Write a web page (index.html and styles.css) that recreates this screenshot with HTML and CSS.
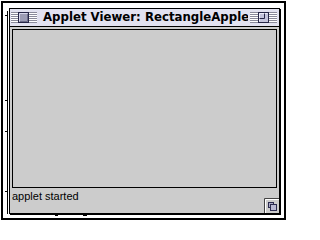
FILE: index.html
```html
<!DOCTYPE html>
<html>
<head>
<meta charset="utf-8">
<link rel="stylesheet" href="styles.css">
</head>
<body>
<div class="screen">
  <div class="behind-edge"></div>
  <div class="tick t1"></div>
  <div class="tick t2"></div>
  <div class="tick t3"></div>
  <div class="tick t4"></div>
  <div class="mark m1"></div>
  <div class="mark m2"></div>
  <div class="window">
    <div class="titlebar">
      <div class="stripes s-a"></div>
      <svg class="box" width="11" height="11" viewBox="0 0 11 11">
        <rect x="0.5" y="0.5" width="10" height="10" fill="#9c9cb4" stroke="#262646"/>
        <path d="M1.5 9.5V1.5H9.5" fill="none" stroke="#d8d8ec"/>
        <path d="M2 9.5H9.5V2" fill="none" stroke="#6c6c88"/>
      </svg>
      <div class="stripes s-b"></div>
      <div class="title">Applet Viewer: RectangleApplet</div>
      <div class="stripes s-b"></div>
      <svg class="box" width="11" height="11" viewBox="0 0 11 11">
        <rect x="0.5" y="0.5" width="10" height="10" fill="#c4c4dc" stroke="#262646"/>
        <path d="M1.5 9.5V1.5H9.5" fill="none" stroke="#eeeefa"/>
        <path d="M1.5 6.5H6.5V1.5" fill="none" stroke="#262646"/>
      </svg>
      <div class="stripes s-c"></div>
    </div>
    <div class="content">
      <div class="panel"></div>
      <div class="status">
        <span class="status-text">applet started</span>
        <svg class="grow" width="15" height="15" viewBox="0 0 15 15">
          <path d="M0.5 15V0.5H15" fill="none" stroke="#444"/>
          <path d="M1.5 15V1.5H15" fill="none" stroke="#fff"/>
          <rect x="4.5" y="4.5" width="5" height="5" fill="#a8a8c4" stroke="#2a2a4e"/>
          <rect x="6.5" y="6.5" width="6" height="6" fill="#b8b8d2" stroke="#2a2a4e"/>
        </svg>
      </div>
    </div>
  </div>
</div>
</body>
</html>
```
FILE: styles.css
```css
html, body {
  margin: 0;
  padding: 0;
  background: #fff;
}

body {
  width: 287px;
  height: 221px;
  overflow: hidden;
}

.screen {
  position: relative;
  box-sizing: border-box;
  margin: 1px;
  width: 285px;
  height: 219px;
  border: 2px solid #000;
  padding: 5px 0 0 6px;
}

.behind-edge {
  position: absolute;
  left: 4px;
  top: 8px;
  width: 1px;
  height: 203px;
  background: #000;
}

.tick {
  position: absolute;
  left: 2px;
  width: 3px;
  height: 1px;
  background: #000;
}
.t1 { top: 12px; }
.t2 { top: 97px; }
.t3 { top: 128px; }
.t4 { top: 188px; }

.mark {
  position: absolute;
  top: 211px;
  height: 2px;
  background: #000;
}
.m1 { left: 52px; width: 3px; }
.m2 { left: 80px; width: 4px; }

.window {
  position: relative;
  box-sizing: border-box;
  width: 271px;
  height: 206px;
  border: 1px solid #000;
  box-shadow: 1px 1px 0 #000;
  background: #cccccc;
  display: flex;
  flex-direction: column;
}

.titlebar {
  box-sizing: border-box;
  height: 18px;
  flex: none;
  border-bottom: 1px solid #000;
  background: #e2e2f0;
  display: flex;
  align-items: center;
  padding: 0 2px 0 1px;
}

.stripes {
  height: 11px;
  flex: none;
  background: repeating-linear-gradient(to bottom, #8a8a9a 0, #8a8a9a 1px, #ffffff 1px, #ffffff 2px);
}
.s-a { width: 7px; }
.s-b { width: 8px; }
.s-c { width: 8px; }

.box {
  flex: none;
  display: block;
}

.title {
  flex: 1;
  min-width: 0;
  overflow: hidden;
  white-space: nowrap;
  font-family: "DejaVu Sans", sans-serif;
  font-weight: bold;
  font-size: 11.75px;
  line-height: 17px;
  color: #000;
  padding-left: 6px;
  margin-right: 2px;
}

.content {
  flex: 1;
  display: flex;
  flex-direction: column;
  padding: 2px 0 0 2px;
}

.panel {
  box-sizing: border-box;
  width: 265px;
  height: 159px;
  flex: none;
  border: 1px solid #000;
  background: #cccccc;
}

.status {
  flex: 1;
  display: flex;
  justify-content: space-between;
  align-items: flex-start;
}

.status-text {
  padding-top: 2px;
  font-family: "Liberation Sans", Arial, sans-serif;
  font-size: 11px;
  line-height: 13px;
  color: #000;
}

.grow {
  display: block;
  align-self: flex-end;
  flex: none;
}
```
